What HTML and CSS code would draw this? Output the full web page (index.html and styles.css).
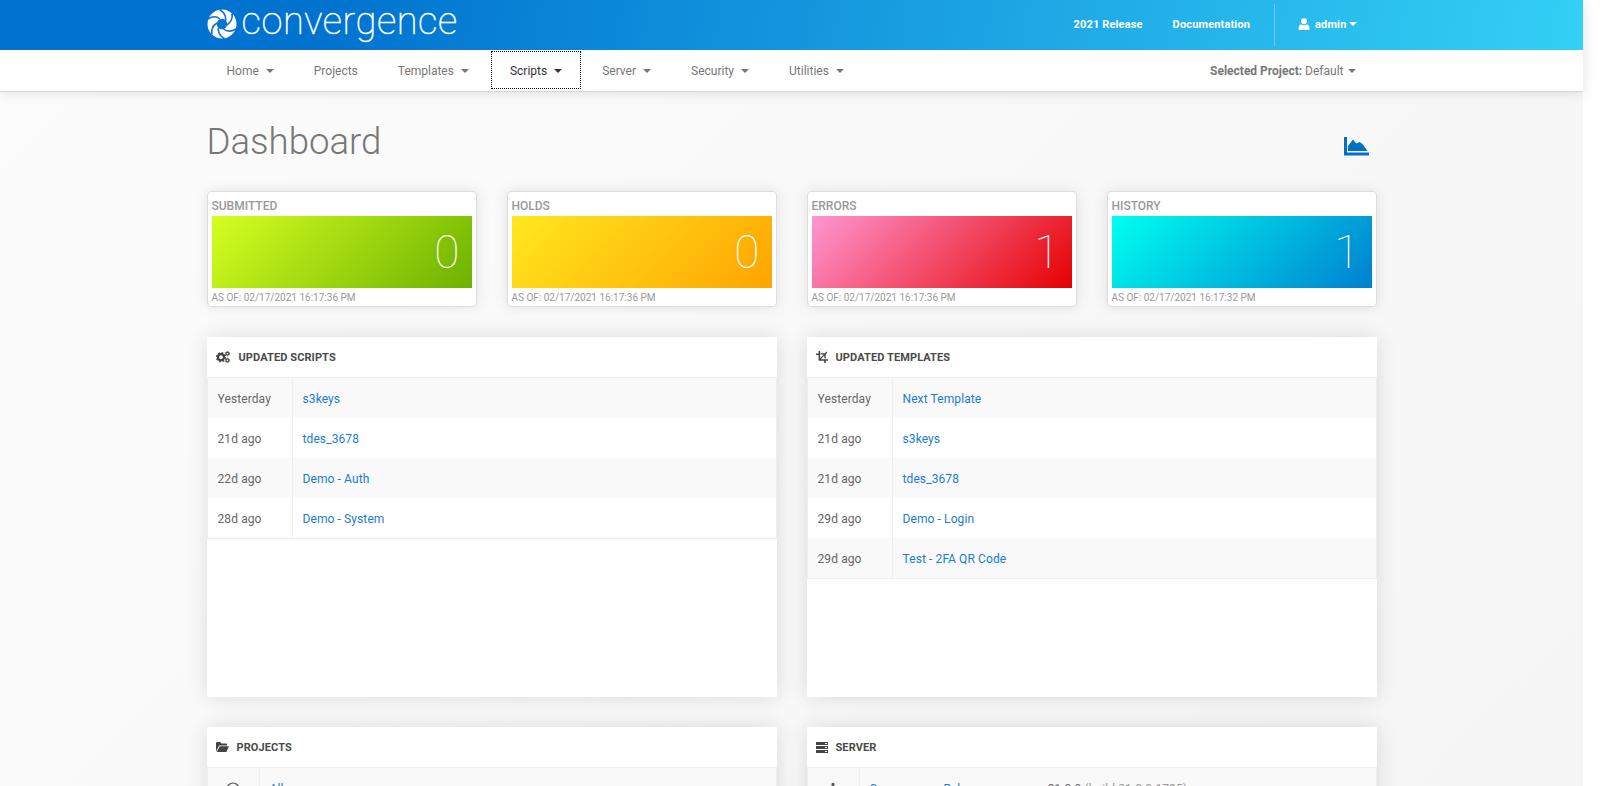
FILE: index.html
```html
<!DOCTYPE html>
<html lang="en">
<head>
<meta charset="utf-8">
<title>Convergence - Dashboard</title>
<link rel="stylesheet" href="styles.css">
</head>
<body>
<div class="page">
  <div class="top">
    <header class="brandbar">
      <div class="container brandbar-inner">
        <a class="logo">
          <svg class="logo-mark" viewBox="0 0 30 30" width="30" height="30" aria-hidden="true">
            <circle cx="15" cy="15" r="14.5" fill="#fff"/>
            <circle cx="15" cy="15" r="5.2" fill="#0874d0"/>
            <g fill="none" stroke="#0874d0" stroke-width="1.6">
              <path d="M18.6 11.6C19 7.5 17 3 12.5 0.5"/>
              <path d="M20 16C23.5 13.5 26 10 25 4.5"/>
              <path d="M16.5 20C19.5 22.5 24 23 29 20"/>
              <path d="M11.5 19C10.8 23 13 27 17.5 29.5"/>
              <path d="M10 14C6.5 16 4 20 5 25.5"/>
              <path d="M13 10C10 7.5 5.5 7 1 10"/>
            </g>
          </svg>
          <span class="logo-word">convergence</span>
        </a>
        <nav class="brand-links">
          <a class="brand-link">2021 Release</a>
          <a class="brand-link">Documentation</a>
          <span class="brand-divider"></span>
          <a class="brand-user">
            <svg class="user-icon" viewBox="0 0 12 12" width="12" height="12" aria-hidden="true"><circle cx="6" cy="3.2" r="3"/><path d="M0.6 12V9.8C0.6 7.6 2 6.4 3.4 6.2C4 6.8 5 7.2 6 7.2C7 7.2 8 6.8 8.6 6.2C10 6.4 11.4 7.6 11.4 9.8V12Z"/></svg>
            <span>admin</span><i class="caret caret-light"></i>
          </a>
        </nav>
      </div>
    </header>
    <div class="menubar">
      <div class="container menubar-inner">
        <ul class="menu">
          <li class="menu-item">Home<i class="caret"></i></li>
          <li class="menu-item">Projects</li>
          <li class="menu-item">Templates<i class="caret"></i></li>
          <li class="menu-item is-active">Scripts<i class="caret"></i></li>
          <li class="menu-item">Server<i class="caret"></i></li>
          <li class="menu-item">Security<i class="caret"></i></li>
          <li class="menu-item">Utilities<i class="caret"></i></li>
        </ul>
        <div class="project-select"><b>Selected Project:</b> Default<i class="caret caret-tight"></i></div>
      </div>
    </div>
  </div>

  <main class="container content">
    <div class="title-row">
      <h1 class="title">Dashboard</h1>
      <svg class="chart-icon" viewBox="0 0 25 19" width="25" height="19" aria-hidden="true"><path d="M0 0H3V15.5H25V18.5H0Z"/><path d="M4 14V9L9 2.5L12.3 6.5L15.5 5L18.5 7L23.5 14Z"/></svg>
    </div>

    <section class="stats">
      <article class="stat">
        <h3 class="stat-label">SUBMITTED</h3>
        <div class="stat-box grad-green">0</div>
        <p class="stat-time">AS OF: 02/17/2021 16:17:36 PM</p>
      </article>
      <article class="stat">
        <h3 class="stat-label">HOLDS</h3>
        <div class="stat-box grad-orange">0</div>
        <p class="stat-time">AS OF: 02/17/2021 16:17:36 PM</p>
      </article>
      <article class="stat">
        <h3 class="stat-label">ERRORS</h3>
        <div class="stat-box grad-red">1</div>
        <p class="stat-time">AS OF: 02/17/2021 16:17:36 PM</p>
      </article>
      <article class="stat">
        <h3 class="stat-label">HISTORY</h3>
        <div class="stat-box grad-blue">1</div>
        <p class="stat-time">AS OF: 02/17/2021 16:17:32 PM</p>
      </article>
    </section>

    <section class="panels">
      <article class="panel">
        <h2 class="panel-head">
          <svg class="panel-icon" viewBox="0 0 14 12" width="14" height="12" aria-hidden="true">
            <circle cx="5" cy="6.2" r="3" fill="none" stroke="#444" stroke-width="2.2"/>
            <circle cx="5" cy="6.2" r="4.4" fill="none" stroke="#444" stroke-width="1.6" stroke-dasharray="1.7 1.75"/>
            <circle cx="11.4" cy="2.6" r="1.5" fill="none" stroke="#444" stroke-width="1.2"/>
            <circle cx="11.4" cy="2.6" r="2.3" fill="none" stroke="#444" stroke-width=".8" stroke-dasharray="1 1.4"/>
            <circle cx="11.4" cy="9.4" r="1.5" fill="none" stroke="#444" stroke-width="1.2"/>
            <circle cx="11.4" cy="9.4" r="2.3" fill="none" stroke="#444" stroke-width=".8" stroke-dasharray="1 1.4"/>
          </svg>
          <span>Updated Scripts</span>
        </h2>
        <table class="list">
          <tr><td class="when">Yesterday</td><td><a class="link">s3keys</a></td></tr>
          <tr><td class="when">21d ago</td><td><a class="link">tdes_3678</a></td></tr>
          <tr><td class="when">22d ago</td><td><a class="link">Demo - Auth</a></td></tr>
          <tr><td class="when">28d ago</td><td><a class="link">Demo - System</a></td></tr>
        </table>
      </article>

      <article class="panel">
        <h2 class="panel-head head-tight">
          <svg class="panel-icon" viewBox="0 0 12 12" width="12" height="12" aria-hidden="true"><path fill="#444" d="M2.6 0H4.2V7.2L7.8 3.6H4.8V2.2H9L10.4 0.6L11.4 1.6L9.8 3.2V7.6H8.4V4.6L4.8 8.2H12V9.8H9.8V12H8.2V9.8H2.6V4H0V2.4H2.6Z"/></svg>
          <span>Updated Templates</span>
        </h2>
        <table class="list">
          <tr><td class="when">Yesterday</td><td><a class="link">Next Template</a></td></tr>
          <tr><td class="when">21d ago</td><td><a class="link">s3keys</a></td></tr>
          <tr><td class="when">21d ago</td><td><a class="link">tdes_3678</a></td></tr>
          <tr><td class="when">29d ago</td><td><a class="link">Demo - Login</a></td></tr>
          <tr><td class="when">29d ago</td><td><a class="link">Test - 2FA QR Code</a></td></tr>
        </table>
      </article>

      <article class="panel">
        <h2 class="panel-head head-tight">
          <svg class="panel-icon" viewBox="0 0 13 10" width="13" height="10" aria-hidden="true"><path fill="#444" d="M0 9.4V1.2C0 .5 .5 0 1.2 0H4.4L5.4 1.4H10C10.6 1.4 11 1.9 11 2.5V3.4H3.2L0 9.4ZM3.8 4.2H13L10.4 10H0.7L3.8 4.2Z"/></svg>
          <span>Projects</span>
        </h2>
        <table class="list list-narrow">
          <tr>
            <td class="when when-icon"><svg viewBox="0 0 14 14" width="14" height="14" aria-hidden="true"><circle cx="7" cy="7" r="6" fill="none" stroke="#555" stroke-width="1.2"/></svg></td>
            <td><a class="link">All</a></td>
          </tr>
        </table>
      </article>

      <article class="panel">
        <h2 class="panel-head head-tight">
          <svg class="panel-icon" viewBox="0 0 12 11" width="12" height="11" aria-hidden="true"><path fill="#444" d="M0 0H12V3H0ZM0 4H12V7H0ZM0 8H12V11H0Z"/><path fill="#fff" d="M9 1H11V2H9ZM9 5H11V6H9ZM9 9H11V10H9Z"/></svg>
          <span>Server</span>
        </h2>
        <table class="list list-narrow">
          <tr>
            <td class="when when-icon"><svg viewBox="0 0 6 14" width="6" height="14" aria-hidden="true"><circle cx="3" cy="2.4" r="1.6" fill="#555"/><path fill="#555" d="M1 6H4V12H5V13H1V12H2V7H1Z"/></svg></td>
            <td class="server-name"><a class="link">Convergence Release</a></td>
            <td class="server-value">21.0.0 <span class="muted">(build 21.0.0.1795)</span></td>
          </tr>
        </table>
      </article>
    </section>
  </main>
</div>
</body>
</html>
```

FILE: styles.css
```css
* { box-sizing: border-box; }

html, body {
  margin: 0;
  height: 786px;
  overflow: hidden;
  background: #fff;
}

body {
  font-family: Roboto, "Liberation Sans", sans-serif;
  font-size: 12px;
  color: #666;
}

.page {
  width: 1583px;
  height: 786px;
  background: linear-gradient(135deg, #fcfcfc 0%, #f5f5f5 100%);
}

.container {
  width: 1200px;
  margin: 0 auto;
  padding: 0 15px;
}

.top {
  position: relative;
  box-shadow: 0 1px 12px rgba(0, 0, 0, .12);
}

.brandbar {
  height: 50px;
  background: linear-gradient(100deg, #0072cf 0%, #0072cf 20%, #34d0f5 100%);
}

.brandbar-inner {
  height: 50px;
  display: flex;
  align-items: center;
  justify-content: space-between;
}

.logo {
  display: flex;
  align-items: center;
  height: 50px;
}

.logo-mark { margin-top: -3px; flex: none; }

.logo-word {
  margin-left: 5px;
  margin-top: -8px;
  font-family: Roboto, sans-serif;
  font-weight: 100;
  font-size: 38px;
  letter-spacing: .6px;
  line-height: 44px;
  color: #fff;
  -webkit-text-stroke: .5px #fff;
}

.brand-links {
  display: flex;
  align-items: center;
  height: 50px;
  padding-bottom: 2px;
  margin-right: 20px;
}

.brand-link {
  font-size: 11px;
  font-weight: 700;
  letter-spacing: .15px;
  color: #fff;
  margin-left: 30px;
}

.brand-divider {
  width: 1px;
  height: 42px;
  margin-top: 2px;
  margin-left: 24px;
  background: rgba(255, 255, 255, .3);
}

.brand-user {
  display: flex;
  align-items: center;
  margin-left: 23px;
  font-size: 11px;
  font-weight: 700;
  letter-spacing: .15px;
  color: #fff;
}

.user-icon { fill: #fff; margin-right: 5px; }

.caret {
  display: inline-block;
  width: 0;
  height: 0;
  margin-left: 7px;
  border-top: 4px solid currentColor;
  border-left: 4px solid transparent;
  border-right: 4px solid transparent;
}

.caret-light { margin-left: 2px; }
.caret-tight { margin-left: 4px; vertical-align: 2px; }

.menubar {
  height: 42px;
  background: #fff;
  border-bottom: 1px solid #d6d6d6;
}

.menubar-inner {
  display: flex;
  align-items: center;
  justify-content: space-between;
  height: 41px;
}

.menu {
  display: flex;
  list-style: none;
  margin: 0;
  padding: 0;
  height: 41px;
}

.menu-item {
  display: flex;
  align-items: center;
  height: 38px;
  margin-top: 2px;
  padding: 0 20px;
  color: #777;
}

.menu-item.is-active {
  margin: 1px 1px 0 2px;
  padding: 2px 18px 0;
  color: #333;
  border: 1px dotted #000;
}

.project-select {
  margin-right: 21px;
  padding-top: 1px;
  color: #777;
}

.project-select b { font-weight: 700; }

.title-row {
  display: flex;
  align-items: flex-start;
  justify-content: space-between;
  height: 99px;
  padding-top: 27px;
}

.title {
  margin: 0;
  font-size: 36.6px;
  font-weight: 300;
  line-height: 46px;
  color: #777;
}

.chart-icon {
  fill: #0070c9;
  margin: 18px 8px 0 0;
}

.stats {
  display: grid;
  grid-template-columns: repeat(4, 270px);
  column-gap: 30px;
}

.stat {
  height: 116px;
  padding: 0 4px;
  background: #fff;
  border: 1px solid #ddd;
  border-radius: 4px;
  box-shadow: 0 0 14px rgba(0, 0, 0, .1);
}

.stat-label {
  margin: 0;
  height: 24px;
  font-size: 12px;
  font-weight: 500;
  line-height: 28px;
  color: #999;
}

.stat-box {
  height: 72px;
  padding-right: 12px;
  text-align: right;
  font-size: 46px;
  font-weight: 100;
  line-height: 72px;
  color: #fff;
  text-shadow: 0 0 6px rgba(0, 0, 0, .08);
}

.grad-green  { background: linear-gradient(135deg, #d6ff20 0%, #6cb200 100%); }
.grad-orange { background: linear-gradient(135deg, #ffe81f 0%, #ffa400 100%); }
.grad-red    { background: linear-gradient(135deg, #ff96d2 0%, #e60000 100%); }
.grad-blue   { background: linear-gradient(135deg, #00fff0 0%, #0080d0 100%); }

.stat-time {
  margin: 0;
  font-size: 10px;
  line-height: 20px;
  color: #999;
}

.panels {
  display: grid;
  grid-template-columns: repeat(2, 570px);
  gap: 30px;
  margin-top: 30px;
}

.panel {
  height: 360px;
  background: #fff;
  box-shadow: 0 0 20px rgba(0, 0, 0, .12);
}

.panel-head {
  display: flex;
  align-items: center;
  height: 40px;
  margin: 0;
  padding-left: 9px;
  font-size: 11px;
  font-weight: 700;
  letter-spacing: .1px;
  text-transform: uppercase;
  color: #4a4a4a;
}

.panel-icon { margin-right: 9px; flex: none; }
.head-tight .panel-icon { margin-right: 8px; }

.list {
  width: 100%;
  border-collapse: separate;
  border-spacing: 0;
  border-top: 1px solid #eee;
  border-bottom: 1px solid #eee;
  letter-spacing: .1px;
}

.list td {
  height: 40px;
  padding: 2px 10px 0;
  vertical-align: middle;
}

.list td:first-child { border-left: 1px solid #eee; }
.list td:last-child { border-right: 1px solid #eee; }

.list tr:nth-child(odd) td { background: #f9f9f9; }

.list .when {
  width: 86px;
  border-right: 1px solid #eee;
  white-space: nowrap;
}

.list-narrow .when { width: 53px; }

.when-icon { text-align: center; }
.when-icon svg { vertical-align: middle; }

.link { color: #1b7bd0; }

.server-name { width: 178px; }
.muted { color: #999; }
```
